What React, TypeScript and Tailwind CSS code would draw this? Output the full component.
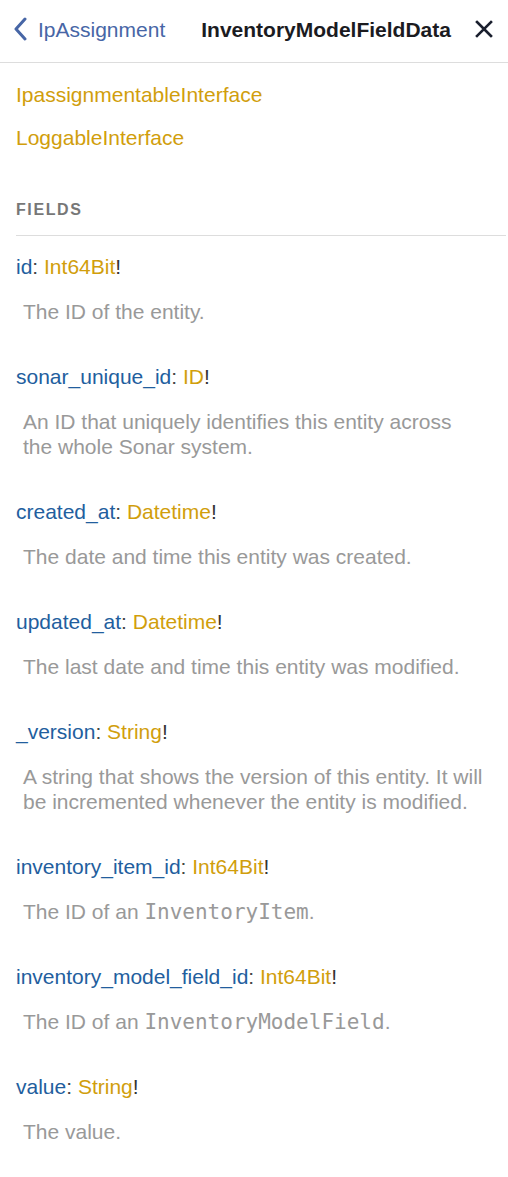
import React from "react";

type Field = { name: string; type: string; desc: React.ReactNode };

const Code = ({ children }: { children: React.ReactNode }) => (
  <code className="font-['DejaVu_Sans_Mono',monospace] text-[21px] leading-[20px]">{children}</code>
);

const fields: Field[] = [
  { name: "id", type: "Int64Bit", desc: "The ID of the entity." },
  { name: "sonar_unique_id", type: "ID", desc: "An ID that uniquely identifies this entity across the whole Sonar system." },
  { name: "created_at", type: "Datetime", desc: "The date and time this entity was created." },
  { name: "updated_at", type: "Datetime", desc: "The last date and time this entity was modified." },
  { name: "_version", type: "String", desc: "A string that shows the version of this entity. It will be incremented whenever the entity is modified." },
  { name: "inventory_item_id", type: "Int64Bit", desc: <>The ID of an <Code>InventoryItem</Code>.</> },
  { name: "inventory_model_field_id", type: "Int64Bit", desc: <>The ID of an <Code>InventoryModelField</Code>.</> },
  { name: "value", type: "String", desc: "The value." },
];

export default function App() {
  return (
    <div className="w-[508px] min-h-[1177px] bg-white font-['Liberation_Sans',Arial,sans-serif] text-[21px] leading-[25px]">
      <header className="h-[63px] border-b border-[#dddddd] flex items-center pl-[13px] pb-[4px]">
        <div className="flex items-center text-[#4766a6]">
          <svg width="16" height="24" viewBox="0 0 16 24" className="mr-[9px]">
            <path d="M12 2 L3 12 L12 22" fill="none" stroke="#4766a6" strokeWidth="3" strokeLinecap="round" strokeLinejoin="round" />
          </svg>
          <span>IpAssignment</span>
        </div>
        <div className="ml-[36px] font-bold text-[#1b1b1f]">InventoryModelFieldData</div>
        <svg width="20" height="20" viewBox="0 0 20 20" className="ml-[23px]">
          <path d="M3 3 L17 17 M17 3 L3 17" stroke="#1a1f2e" strokeWidth="2.6" strokeLinecap="square" />
        </svg>
      </header>

      <div className="pt-[19px] px-4 flex flex-col gap-[18px] text-[#d19e0c]">
        <div>IpassignmentableInterface</div>
        <div>LoggableInterface</div>
      </div>

      <div className="mt-[50px] ml-4 mr-[2px] pb-[15px] border-b border-[#dddddd] text-[16px] leading-[20px] font-bold tracking-[1.6px] text-[#777777]">
        FIELDS
      </div>

      <div className="pt-[18px] px-4 flex flex-col gap-[40px] pb-[30px]">
        {fields.map((f) => (
          <div key={f.name}>
            <div>
              <span className="text-[#225e9e]">{f.name}</span>
              <span className="text-[#444444]">: </span>
              <span className="text-[#d19e0c]">{f.type}</span>
              <span className="text-[#333333]">!</span>
            </div>
            <div className="mt-[20px] px-[7px] text-[#999999]">{f.desc}</div>
          </div>
        ))}
      </div>
    </div>
  );
}
